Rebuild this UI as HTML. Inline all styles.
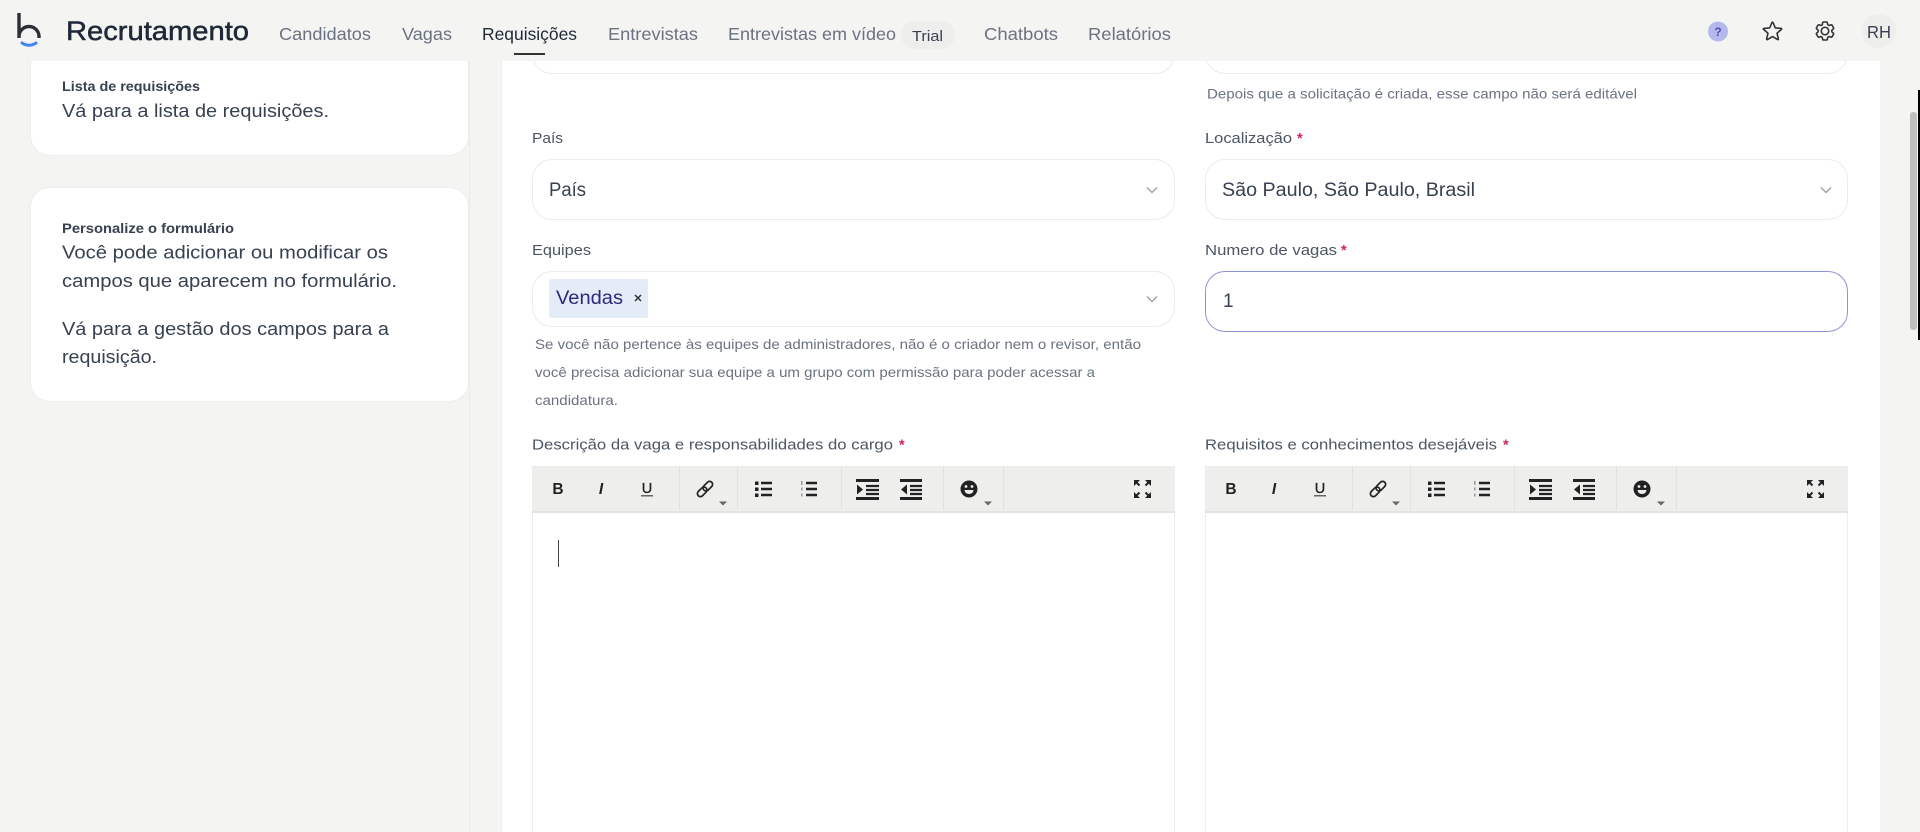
<!DOCTYPE html>
<html lang="pt-BR">
<head>
<meta charset="utf-8">
<title>Recrutamento - Requisições</title>
<style>
html,body{margin:0;padding:0;width:1920px;height:832px;overflow:hidden;background:#f4f4f3;font-family:"Liberation Sans",sans-serif}
#root{position:relative;width:1920px;height:832px;overflow:hidden;background:#f4f4f3;filter:blur(.3px)}
.a{position:absolute;box-sizing:border-box}
.inp{background:#fff;border:1px solid #ececea;border-radius:20px}
.card{background:#fff;border:1px solid #eeeeec;border-radius:20px}
svg{position:absolute;left:0;top:0}
text{font-family:"Liberation Sans",sans-serif}
.nav{font-size:17.5px;fill:#6b7280}
.lab{font-size:14.5px;fill:#4b5563}
.req{font-size:14.5px;fill:#d1215f;font-weight:bold}
.hint{font-size:14px;fill:#6b7280}
.val{font-size:19px;fill:#374151}
.ct{font-size:14px;font-weight:bold;fill:#374151}
.cb{font-size:18px;fill:#374151}
</style>
</head>
<body>
<div id="root">
<div class="a" style="left:469px;top:61px;width:1px;height:771px;background:#ebebe9"></div>
<div class="a" style="left:501px;top:61px;width:1379px;height:771px;background:#fff;border-left:1px solid #eeeeec"></div>
<div class="a" style="left:1910px;top:112px;width:7px;height:218px;background:#bfbfbc;border-radius:3px"></div>
<div class="a" style="left:1918px;top:90px;width:2px;height:250px;background:#000"></div>

<div class="a card" style="left:30px;top:20px;width:439px;height:136px"></div>
<div class="a card" style="left:30px;top:187px;width:439px;height:215px"></div>

<div class="a inp" style="left:532px;top:10px;width:643px;height:64px"></div>
<div class="a inp" style="left:1205px;top:10px;width:643px;height:64px"></div>
<div class="a" style="left:0;top:0;width:1920px;height:61px;background:#f4f4f3"></div>

<div class="a" style="left:901px;top:21px;width:54px;height:28px;border-radius:14px;background:#eeeeec"></div>
<div class="a" style="left:1862px;top:14px;width:34px;height:34px;border-radius:50%;background:#eeeeeb"></div>

<div class="a inp" style="left:532px;top:159px;width:643px;height:61px"></div>
<div class="a inp" style="left:1205px;top:159px;width:643px;height:61px"></div>
<div class="a inp" style="left:532px;top:271px;width:643px;height:56px"></div>
<div class="a" style="left:549px;top:279px;width:99px;height:39px;background:#e4ecf8;border-radius:2px"></div>
<div class="a inp" style="left:1205px;top:271px;width:643px;height:61px;border-color:#8f94d6"></div>

<div class="a" style="left:532px;top:466px;width:643px;height:366px;border:1px solid #eeeeec;border-bottom:0;background:#fff"></div>
<div class="a" style="left:1205px;top:466px;width:643px;height:366px;border:1px solid #eeeeec;border-bottom:0;background:#fff"></div>
<div class="a" style="left:532px;top:466px;width:643px;height:47px;background:#eeeeec;border-bottom:2px solid #e3e3e1"></div>
<div class="a" style="left:1205px;top:466px;width:643px;height:47px;background:#eeeeec;border-bottom:2px solid #e3e3e1"></div>
<div class="a" style="left:558px;top:540px;width:1px;height:27px;background:#444"></div>

<svg width="1920" height="832" viewBox="0 0 1920 832" xmlns="http://www.w3.org/2000/svg">
  <!-- logo -->
  <path d="M19 13V38M19 36.500a10 10 0 0 1 20 0v1.500" fill="none" stroke="#2b2f36" stroke-width="3.400"/>
  <path d="M22 43q7 4.500 14 0" fill="none" stroke="#4285ee" stroke-width="3" stroke-linecap="round"/>

  <!-- header text -->
  <text x="66" y="40" textLength="183" lengthAdjust="spacingAndGlyphs" style="font-size:26.500px;fill:#1f2937;stroke:#1f2937;stroke-width:.5">Recrutamento</text>
  <text class="nav" x="279" y="40" textLength="92" lengthAdjust="spacingAndGlyphs">Candidatos</text>
  <text class="nav" x="402" y="40" textLength="50" lengthAdjust="spacingAndGlyphs">Vagas</text>
  <text class="nav" x="482" y="40" textLength="95" lengthAdjust="spacingAndGlyphs" style="fill:#1f2937">Requisições</text>
  <rect x="514" y="53" width="31" height="2" fill="#333"/>
  <text class="nav" x="608" y="40" textLength="90" lengthAdjust="spacingAndGlyphs">Entrevistas</text>
  <text class="nav" x="728" y="40" textLength="168" lengthAdjust="spacingAndGlyphs">Entrevistas em vídeo</text>
  <text x="912" y="41" textLength="31" lengthAdjust="spacingAndGlyphs" style="font-size:14.500px;fill:#374151">Trial</text>
  <text class="nav" x="984" y="40" textLength="74" lengthAdjust="spacingAndGlyphs">Chatbots</text>
  <text class="nav" x="1088" y="40" textLength="83" lengthAdjust="spacingAndGlyphs">Relatórios</text>

  <!-- header icons -->
  <circle cx="1718" cy="31.500" r="10" fill="#b4b8ec"/>
  <text x="1718" y="36" text-anchor="middle" style="font-size:12px;font-weight:bold;fill:#4a4fb0">?</text>
  <path transform="translate(1760.500 19)" d="M11.480 3.499a.562.562 0 0 1 1.040 0l2.125 5.111a.563.563 0 0 0 .475.345l5.518.442c.499.040.701.663.321.988l-4.204 3.602a.563.563 0 0 0-.182.557l1.285 5.385a.562.562 0 0 1-.840.610l-4.725-2.885a.562.562 0 0 0-.586 0L6.982 20.540a.562.562 0 0 1-.840-.610l1.285-5.386a.562.562 0 0 0-.182-.557l-4.204-3.602a.562.562 0 0 1 .321-.988l5.518-.442a.563.563 0 0 0 .475-.345L11.480 3.500Z" fill="none" stroke="#333" stroke-width="1.600" stroke-linejoin="round"/>
  <g transform="translate(1813 19)" fill="none" stroke="#333" stroke-width="1.600" stroke-linejoin="round">
    <path d="M9.594 3.940c.090-.542.560-.940 1.110-.940h2.593c.550 0 1.020.398 1.110.940l.213 1.281c.063.374.313.686.645.870.074.040.147.083.220.127.325.196.720.257 1.075.124l1.217-.456a1.125 1.125 0 0 1 1.370.490l1.296 2.247a1.125 1.125 0 0 1-.260 1.431l-1.003.827c-.293.241-.438.613-.430.992a7.723 7.723 0 0 1 0 .255c-.008.378.137.750.430.991l1.004.827c.424.350.534.955.260 1.430l-1.298 2.247a1.125 1.125 0 0 1-1.369.491l-1.217-.456c-.355-.133-.750-.072-1.076.124a6.470 6.470 0 0 1-.220.128c-.331.183-.581.495-.644.869l-.213 1.281c-.090.543-.560.940-1.110.940h-2.594c-.550 0-1.019-.398-1.110-.940l-.213-1.281c-.062-.374-.312-.686-.644-.870a6.520 6.520 0 0 1-.220-.127c-.325-.196-.720-.257-1.076-.124l-1.217.456a1.125 1.125 0 0 1-1.369-.490l-1.297-2.247a1.125 1.125 0 0 1 .260-1.431l1.004-.827c.292-.240.437-.613.430-.991a6.932 6.932 0 0 1 0-.255c.007-.380-.138-.751-.430-.992l-1.004-.827a1.125 1.125 0 0 1-.260-1.430l1.297-2.247a1.125 1.125 0 0 1 1.370-.491l1.216.456c.356.133.751.072 1.076-.124.072-.044.146-.086.220-.128.332-.183.582-.495.644-.869l.214-1.280Z"/>
    <circle cx="12" cy="12" r="3.750"/>
  </g>
  <text x="1867" y="38" textLength="24" lengthAdjust="spacingAndGlyphs" style="font-size:17.500px;fill:#374151">RH</text>

  <!-- sidebar text -->
  <text class="ct" x="62" y="91" textLength="138" lengthAdjust="spacingAndGlyphs">Lista de requisições</text>
  <text class="cb" x="62" y="117" textLength="267" lengthAdjust="spacingAndGlyphs">Vá para a lista de requisições.</text>
  <text class="ct" x="62" y="233" textLength="172" lengthAdjust="spacingAndGlyphs">Personalize o formulário</text>
  <text class="cb" x="62" y="258.500" textLength="326" lengthAdjust="spacingAndGlyphs">Você pode adicionar ou modificar os</text>
  <text class="cb" x="62" y="287" textLength="335" lengthAdjust="spacingAndGlyphs">campos que aparecem no formulário.</text>
  <text class="cb" x="62" y="335" textLength="327" lengthAdjust="spacingAndGlyphs">Vá para a gestão dos campos para a</text>
  <text class="cb" x="62" y="363" textLength="95" lengthAdjust="spacingAndGlyphs">requisição.</text>

  <!-- form text -->
  <text class="hint" x="1207" y="98.500" textLength="430" lengthAdjust="spacingAndGlyphs">Depois que a solicitação é criada, esse campo não será editável</text>
  <text class="lab" x="532" y="143" textLength="31" lengthAdjust="spacingAndGlyphs">País</text>
  <text class="lab" x="1205" y="143" textLength="87" lengthAdjust="spacingAndGlyphs">Localização</text>
  <text class="req" x="1297" y="143">*</text>
  <text class="val" x="549" y="196" textLength="37" lengthAdjust="spacingAndGlyphs">País</text>
  <text class="val" x="1222" y="196" textLength="253" lengthAdjust="spacingAndGlyphs">São Paulo, São Paulo, Brasil</text>
  <path d="M1147 187.500l5 5 5-5" fill="none" stroke="#a3a3a3" stroke-width="1.500"/>
  <path d="M1821 187.500l5 5 5-5" fill="none" stroke="#a3a3a3" stroke-width="1.500"/>

  <text class="lab" x="532" y="255" textLength="59" lengthAdjust="spacingAndGlyphs">Equipes</text>
  <text class="lab" x="1205" y="255" textLength="132" lengthAdjust="spacingAndGlyphs">Numero de vagas</text>
  <text class="req" x="1341" y="255">*</text>
  <text x="556" y="304" textLength="67" lengthAdjust="spacingAndGlyphs" style="font-size:19px;fill:#2d2a7e">Vendas</text>
  <path d="M635 295l6 6M641 295l-6 6" stroke="#333" stroke-width="1.500"/>
  <path d="M1147 296.500l5 5 5-5" fill="none" stroke="#a3a3a3" stroke-width="1.500"/>
  <text class="val" x="1223" y="307">1</text>

  <text class="hint" x="535" y="349" textLength="606" lengthAdjust="spacingAndGlyphs">Se você não pertence às equipes de administradores, não é o criador nem o revisor, então</text>
  <text class="hint" x="535" y="377" textLength="560" lengthAdjust="spacingAndGlyphs">você precisa adicionar sua equipe a um grupo com permissão para poder acessar a</text>
  <text class="hint" x="535" y="405" textLength="83" lengthAdjust="spacingAndGlyphs">candidatura.</text>

  <text class="lab" x="532" y="449.500" textLength="361" lengthAdjust="spacingAndGlyphs">Descrição da vaga e responsabilidades do cargo</text>
  <text class="req" x="899" y="449.500">*</text>
  <text class="lab" x="1205" y="449.500" textLength="292" lengthAdjust="spacingAndGlyphs">Requisitos e conhecimentos desejáveis</text>
  <text class="req" x="1503" y="449.500">*</text>

  <!-- toolbar left -->
  <g transform="translate(532 466)">
    <path d="M147.500 0v44M205.500 0v44M309.500 0v44M411.500 0v44M471.500 0v44" stroke="#e2e2e0" stroke-width="1"/>
    <text x="26" y="28" text-anchor="middle" style="font-size:15.500px;font-weight:bold;fill:#222">B</text>
    <text x="69" y="28" text-anchor="middle" style="font-size:15.500px;font-weight:bold;font-style:italic;fill:#222">I</text>
    <text x="115" y="27" text-anchor="middle" style="font-size:14.500px;fill:#222;stroke:#222;stroke-width:.3">U</text>
    <rect x="109" y="29" width="12" height="1.500" fill="#666"/>
    <g transform="rotate(-45 173 23)" fill="none" stroke="#222" stroke-width="1.700"><rect x="163.500" y="20" width="11" height="6" rx="3"/><rect x="171.500" y="20" width="11" height="6" rx="3"/></g>
    <path d="M187 35.500h8l-4 4z" fill="#666"/>
    <path d="M223 15.500h3.500v3.500h-3.500zM223 21.500h3.500v3.500h-3.500zM223 27.500h3.500v3.500h-3.500z" fill="#222"/>
    <path d="M229 17h11M229 23h11M229 29h11" stroke="#222" stroke-width="2.500"/>
    <path d="M269 15h1.500v4h-1.500zM269 21.500h1.500v3h-1.500zM269 27.500h1.500v3h-1.500z" fill="#999"/>
    <path d="M274 17h11M274 23h11M274 29h11" stroke="#222" stroke-width="2.500"/>
    <path d="M334 20h13M334 24h13M334 28h13" stroke="#222" stroke-width="2.200"/>
    <path d="M324 14.500h23M324 32.500h23" stroke="#222" stroke-width="3"/>
    <path d="M325 18.500l6 5-6 5z" fill="#222"/>
    <path d="M378 20h12M378 24h12M378 28h12" stroke="#222" stroke-width="2.200"/>
    <path d="M368 14.500h22M368 32.500h22" stroke="#222" stroke-width="3"/>
    <path d="M375 18.500l-6 5 6 5z" fill="#222"/>
    <circle cx="437" cy="23" r="8.500" fill="#222"/>
    <circle cx="434" cy="20.500" r="1.400" fill="#eee"/><circle cx="440" cy="20.500" r="1.400" fill="#eee"/>
    <path d="M432.500 24h9q-.5 4-4.500 4t-4.500-4z" fill="#eee"/>
    <path d="M452 35.500h8l-4 4z" fill="#666"/>
    <path d="M602 14h6l-6 6zM619 14v6l-6-6zM602 32v-6l6 6zM619 32h-6l6-6z" fill="#222"/>
    <path d="M604 16l3.500 3.500M617 16l-3.500 3.500M604 30l3.500-3.500M617 30l-3.500-3.500" stroke="#222" stroke-width="2"/>
  </g>
  <!-- toolbar right -->
  <g transform="translate(1205 466)">
    <path d="M147.500 0v44M205.500 0v44M309.500 0v44M411.500 0v44M471.500 0v44" stroke="#e2e2e0" stroke-width="1"/>
    <text x="26" y="28" text-anchor="middle" style="font-size:15.500px;font-weight:bold;fill:#222">B</text>
    <text x="69" y="28" text-anchor="middle" style="font-size:15.500px;font-weight:bold;font-style:italic;fill:#222">I</text>
    <text x="115" y="27" text-anchor="middle" style="font-size:14.500px;fill:#222;stroke:#222;stroke-width:.3">U</text>
    <rect x="109" y="29" width="12" height="1.500" fill="#666"/>
    <g transform="rotate(-45 173 23)" fill="none" stroke="#222" stroke-width="1.700"><rect x="163.500" y="20" width="11" height="6" rx="3"/><rect x="171.500" y="20" width="11" height="6" rx="3"/></g>
    <path d="M187 35.500h8l-4 4z" fill="#666"/>
    <path d="M223 15.500h3.500v3.500h-3.500zM223 21.500h3.500v3.500h-3.500zM223 27.500h3.500v3.500h-3.500z" fill="#222"/>
    <path d="M229 17h11M229 23h11M229 29h11" stroke="#222" stroke-width="2.500"/>
    <path d="M269 15h1.500v4h-1.500zM269 21.500h1.500v3h-1.500zM269 27.500h1.500v3h-1.500z" fill="#999"/>
    <path d="M274 17h11M274 23h11M274 29h11" stroke="#222" stroke-width="2.500"/>
    <path d="M334 20h13M334 24h13M334 28h13" stroke="#222" stroke-width="2.200"/>
    <path d="M324 14.500h23M324 32.500h23" stroke="#222" stroke-width="3"/>
    <path d="M325 18.500l6 5-6 5z" fill="#222"/>
    <path d="M378 20h12M378 24h12M378 28h12" stroke="#222" stroke-width="2.200"/>
    <path d="M368 14.500h22M368 32.500h22" stroke="#222" stroke-width="3"/>
    <path d="M375 18.500l-6 5 6 5z" fill="#222"/>
    <circle cx="437" cy="23" r="8.500" fill="#222"/>
    <circle cx="434" cy="20.500" r="1.400" fill="#eee"/><circle cx="440" cy="20.500" r="1.400" fill="#eee"/>
    <path d="M432.500 24h9q-.5 4-4.500 4t-4.500-4z" fill="#eee"/>
    <path d="M452 35.500h8l-4 4z" fill="#666"/>
    <path d="M602 14h6l-6 6zM619 14v6l-6-6zM602 32v-6l6 6zM619 32h-6l6-6z" fill="#222"/>
    <path d="M604 16l3.500 3.500M617 16l-3.500 3.500M604 30l3.500-3.500M617 30l-3.500-3.500" stroke="#222" stroke-width="2"/>
  </g>
</svg>
</div>
</body>
</html>
